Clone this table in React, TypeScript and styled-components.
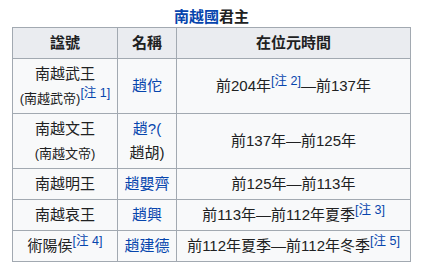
import styled, { createGlobalStyle } from 'styled-components';

const GlobalStyle = createGlobalStyle`
    body {
        margin: 0;
        background: #ffffff;
        font-family: 'Liberation Sans', 'Noto Sans CJK TC', sans-serif;
        color: #202122;
    }
`;

const Page = styled.div`
    padding: 0 0 0 12px;
`;

const Wikitable = styled.table`
    border-collapse: collapse;
    table-layout: fixed;
    width: 398px;
    background: #f8f9fa;
    font-size: 15px;
    line-height: 24px;
`;

const Caption = styled.caption`
    font-weight: 700;
    font-size: 15px;
    line-height: 20px;
    padding-top: 7px;
    text-align: center;
    background: #ffffff;
`;

const Col = styled.col<{ $width: number }>`
    width: ${props => props.$width}px;
`;

const HeadCell = styled.th`
    background: #eaecf0;
    border: 1px solid #a2a9b1;
    padding: 3px 6px;
    font-weight: 700;
    text-align: center;
`;

const Cell = styled.td`
    border: 1px solid #a2a9b1;
    padding: 3px 6px;
    text-align: center;
    vertical-align: middle;
    white-space: nowrap;
`;

const Link = styled.a`
    color: #0645ad;
    text-decoration: none;
`;

const Small = styled.span`
    font-size: 13px;
    line-height: 1;
`;

const Note = styled.sup`
    font-size: 12.5px;
    line-height: 0;
    vertical-align: 6px;
    white-space: nowrap;

    a {
        color: #0645ad;
        text-decoration: none;
    }
`;

const Ref = ({ n }: { n: number }) => (
    <Note>
        <a href="#">[注 {n}]</a>
    </Note>
);

const App = () => (
    <Page>
        <GlobalStyle />
        <Wikitable>
            <Caption>
                <Link href="#">南越國</Link>君主
            </Caption>
            <colgroup>
                <Col $width={105} />
                <Col $width={59} />
                <Col $width={234} />
            </colgroup>
            <thead>
                <tr>
                    <HeadCell>諡號</HeadCell>
                    <HeadCell>名稱</HeadCell>
                    <HeadCell>在位元時間</HeadCell>
                </tr>
            </thead>
            <tbody>
                <tr>
                    <Cell>
                        南越武王
                        <br />
                        <Small>(南越武帝)</Small>
                        <Ref n={1} />
                    </Cell>
                    <Cell>
                        <Link href="#">趙佗</Link>
                    </Cell>
                    <Cell>
                        前204年<Ref n={2} />—前137年
                    </Cell>
                </tr>
                <tr>
                    <Cell>
                        南越文王
                        <br />
                        <Small>(南越文帝)</Small>
                    </Cell>
                    <Cell>
                        <Link href="#">趙?(</Link>
                        <br />
                        趙胡)
                    </Cell>
                    <Cell>前137年—前125年</Cell>
                </tr>
                <tr>
                    <Cell>南越明王</Cell>
                    <Cell>
                        <Link href="#">趙嬰齊</Link>
                    </Cell>
                    <Cell>前125年—前113年</Cell>
                </tr>
                <tr>
                    <Cell>南越哀王</Cell>
                    <Cell>
                        <Link href="#">趙興</Link>
                    </Cell>
                    <Cell>
                        前113年—前112年夏季<Ref n={3} />
                    </Cell>
                </tr>
                <tr>
                    <Cell>
                        術陽侯<Ref n={4} />
                    </Cell>
                    <Cell>
                        <Link href="#">趙建德</Link>
                    </Cell>
                    <Cell>
                        前112年夏季—前112年冬季<Ref n={5} />
                    </Cell>
                </tr>
            </tbody>
        </Wikitable>
    </Page>
);

export default App;
